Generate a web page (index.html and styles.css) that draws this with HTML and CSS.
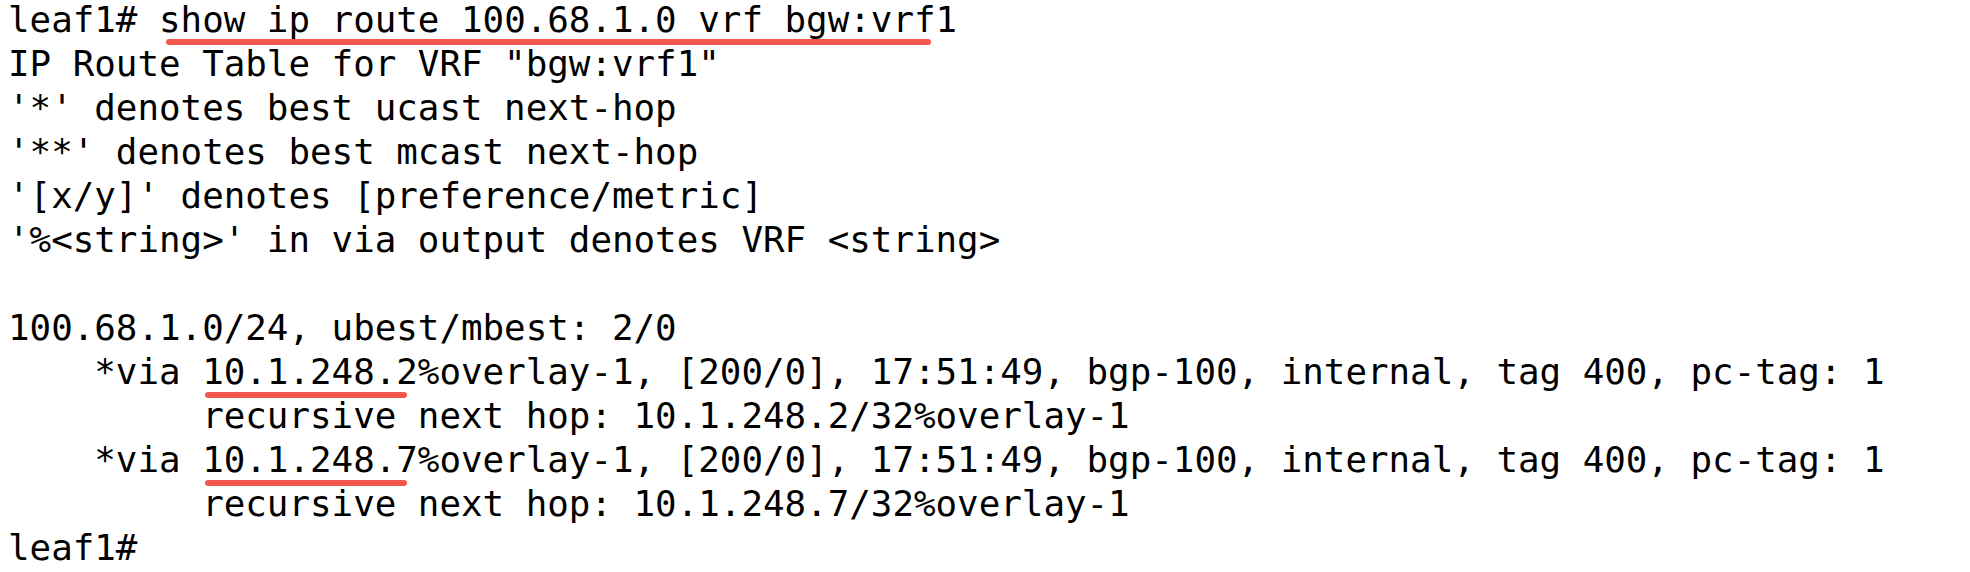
FILE: index.html
```html
<!DOCTYPE html>
<html lang="en">
<head>
<meta charset="utf-8">
<title>show ip route</title>
<link rel="stylesheet" href="styles.css">
</head>
<body>
<pre class="terminal">leaf1# <span class="mark mark-cmd">show ip route 100.68.1.0 vrf bgw:vrf1</span>
IP Route Table for VRF "bgw:vrf1"
'*' denotes best ucast next-hop
'**' denotes best mcast next-hop
'[x/y]' denotes [preference/metric]
'%&lt;string&gt;' in via output denotes VRF &lt;string&gt;

100.68.1.0/24, ubest/mbest: 2/0
    *via <span class="mark mark-ip">10.1.248.2</span>%overlay-1, [200/0], 17:51:49, bgp-100, internal, tag 400, pc-tag: 1
         recursive next hop: 10.1.248.2/32%overlay-1
    *via <span class="mark mark-ip">10.1.248.7</span>%overlay-1, [200/0], 17:51:49, bgp-100, internal, tag 400, pc-tag: 1
         recursive next hop: 10.1.248.7/32%overlay-1
leaf1#</pre>
</body>
</html>
```
FILE: styles.css
```css
html, body {
  margin: 0;
  padding: 0;
  background: #ffffff;
}

.terminal {
  margin: -2px 0 0 8px;
  font-family: "DejaVu Sans Mono", "Liberation Mono", monospace;
  font-size: 35.85px;
  line-height: 44px;
  color: #000000;
  white-space: pre;
}

.mark {
  position: relative;
}

.mark::after {
  content: "";
  position: absolute;
  height: 6px;
  border-radius: 3px;
  background: #f2584d;
}

.mark-cmd::after {
  left: 7px;
  right: 26px;
  top: 40px;
}

.mark-ip::after {
  left: 3px;
  right: 11px;
  top: 41px;
}
```
